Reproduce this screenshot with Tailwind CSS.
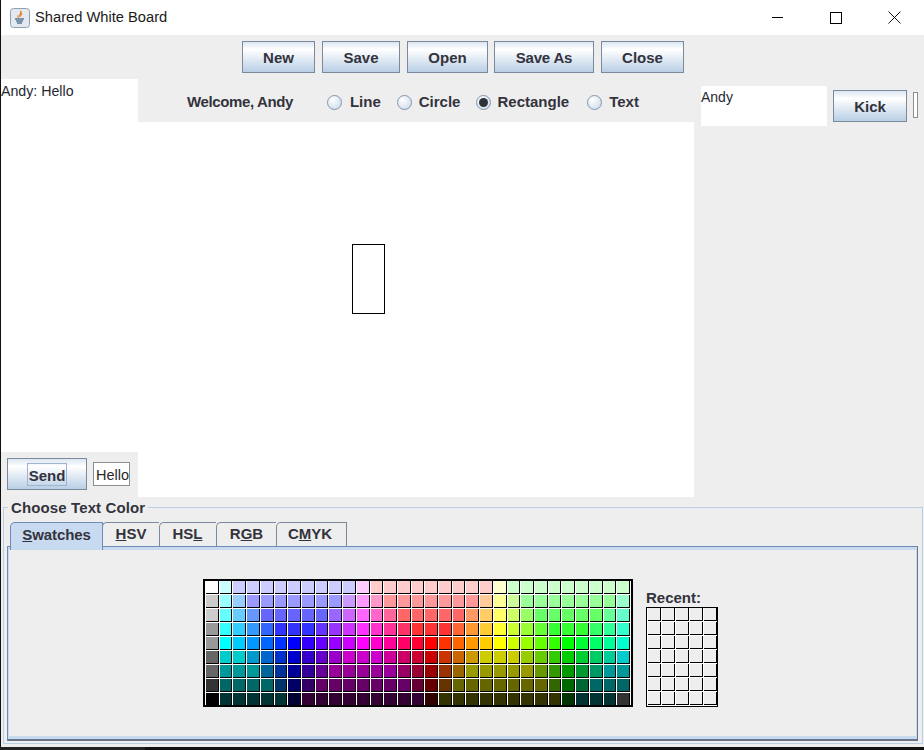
<!DOCTYPE html>
<html lang="en">

<head>
    <meta charset="UTF-8">
    <title>Shared White Board</title>
    <script src="https://cdn.jsdelivr.net/npm/@tailwindcss/browser@4"></script>
</head>

<body class="bg-[#111111] overflow-hidden font-['Liberation_Sans',Arial,sans-serif] text-[#33333d]">
    <div class="w-[924px] h-[750px] flex flex-col">
        <div class="h-[747px] shrink-0 ml-px flex flex-col bg-[#eeeeee]">

            <!-- Title bar -->
            <div class="h-[35px] bg-white flex items-center shrink-0">
                <svg class="ml-[9px]" width="20" height="20" viewBox="0 0 20 20">
                    <rect x="0.5" y="0.5" width="19" height="19" rx="3" fill="#e4e9ef" stroke="#8ea0b3" />
                    <path d="M10 3c2 2-2 3 0 6 1-2 3-2 1-6zM8 7c-1 2 0 3 1 3" fill="#e8822a" stroke="#e8822a" stroke-width=".6" />
                    <path d="M5 11h9M6 13h7M7 15h5" stroke="#5b7a96" stroke-width="1.3" />
                </svg>
                <span class="ml-[5px] text-[14.7px] text-[#1a1a1a]">Shared White Board</span>
                <div class="ml-auto flex items-center">
                    <div class="w-[11px] h-px bg-black mr-[47px]"></div>
                    <div class="w-[12px] h-[12px] border border-black mr-[46px]"></div>
                    <svg class="mr-[23px]" width="13" height="13" viewBox="0 0 13 13">
                        <path d="M.5.5l12 12M12.5.5l-12 12" stroke="#111" fill="none" />
                    </svg>
                </div>
            </div>

            <!-- Toolbar -->
            <div class="h-[44px] shrink-0 flex pt-[6px] pl-[241px] gap-[7px] text-[15px] font-bold">
                <button class="w-[73px] h-[32px] pt-[2px] border border-[#7a8a9c] bg-[linear-gradient(#dbe6f1,#ffffff_25%,#b9cfe5)]">New</button>
                <button class="w-[78px] h-[32px] pt-[2px] border border-[#7a8a9c] bg-[linear-gradient(#dbe6f1,#ffffff_25%,#b9cfe5)]">Save</button>
                <button class="w-[81px] h-[32px] pt-[2px] border border-[#7a8a9c] bg-[linear-gradient(#dbe6f1,#ffffff_25%,#b9cfe5)]">Open</button>
                <button class="w-[100px] h-[32px] pt-[2px] border border-[#7a8a9c] bg-[linear-gradient(#dbe6f1,#ffffff_25%,#b9cfe5)] -ml-px"><span class="tracking-[-0.2px]">Save As</span></button>
                <button class="w-[83px] h-[32px] pt-[2px] border border-[#7a8a9c] bg-[linear-gradient(#dbe6f1,#ffffff_25%,#b9cfe5)]">Close</button>
            </div>

            <!-- Middle -->
            <div class="h-[418px] shrink-0 flex">
                <!-- Chat -->
                <div class="w-[137px] flex flex-col">
                    <div class="flex-1 bg-white text-[14.2px] leading-[24px] text-[#1f2933]">Andy: Hello</div>
                    <div class="h-[45px] flex pt-[6px] pl-[6px]">
                        <button class="w-[80px] h-[32px] border border-[#7a8a9c] bg-[linear-gradient(#dbe6f1,#ffffff_25%,#b9cfe5)] flex items-center justify-center">
                            <span class="w-[40px] h-[23px] border border-[#9fb5cf] text-[15px] font-bold leading-[23px] mt-px">Send</span>
                        </button>
                        <div class="ml-[6px] mt-[4px] w-[37px] h-[24px] bg-white border border-[#8a8f96] text-[14.5px] leading-[24px] pl-[2px] text-[#2a2a2a]">Hello</div>
                    </div>
                </div>

                <!-- Board -->
                <div class="w-[556px] flex flex-col">
                    <div class="h-[43px] flex items-center text-[15px] font-bold pt-[3px] shrink-0">
                        <span class="ml-[49px] tracking-[-0.38px]">Welcome, Andy</span>
                        <span class="ml-[34px] w-[15px] h-[15px] rounded-full border border-[#8296ac] bg-[radial-gradient(circle_at_35%_30%,#ffffff,#c6d7e9)]"></span>
                        <span class="ml-[8px]">Line</span>
                        <span class="ml-[16px] w-[15px] h-[15px] rounded-full border border-[#8296ac] bg-[radial-gradient(circle_at_35%_30%,#ffffff,#c6d7e9)]"></span>
                        <span class="ml-[7px]">Circle</span>
                        <span class="ml-[16px] w-[15px] h-[15px] rounded-full border border-[#8296ac] bg-[radial-gradient(circle_at_35%_30%,#ffffff,#c6d7e9)] flex items-center justify-center">
                            <span class="w-[9px] h-[9px] rounded-full bg-[#2e3338]"></span>
                        </span>
                        <span class="ml-[6px]">Rectangle</span>
                        <span class="ml-[18px] w-[15px] h-[15px] rounded-full border border-[#8296ac] bg-[radial-gradient(circle_at_35%_30%,#ffffff,#c6d7e9)]"></span>
                        <span class="ml-[7px]">Text</span>
                    </div>
                    <div class="flex-1 bg-white relative">
                        <div class="absolute left-[214px] top-[122px] w-[33px] h-[70px] border border-black"></div>
                    </div>
                </div>

                <!-- Users -->
                <div class="flex-1 flex items-start">
                    <div class="ml-[7px] mt-[7px] w-[126px] h-[40px] bg-white text-[14px] leading-[22px] text-[#1f2933]">Andy</div>
                    <button class="ml-[6px] mt-[11px] w-[74px] h-[32px] pt-[2px] border border-[#7a8a9c] bg-[linear-gradient(#dbe6f1,#ffffff_25%,#b9cfe5)] text-[15px] font-bold">Kick</button>
                    <div class="ml-[6px] mt-[13px] w-[5px] h-[26px] border border-[#8a8f96] bg-white"></div>
                </div>
            </div>

            <!-- Colour chooser -->
            <div class="flex-1 relative pt-[10px] pl-[2px] pr-px pb-[3px]">
                <div class="h-full border border-[#b8cfe5] pt-[14px] pl-[3px] pr-[4px] pb-[2px] flex flex-col">
                    <span class="absolute left-[7px] top-[3px] bg-[#eeeeee] px-[3px] text-[15px] font-bold leading-[16px] tracking-[0.12px]">Choose Text Color</span>

                    <!-- Tabs -->
                    <div class="flex h-[24px] shrink-0 pl-[3px] text-[15px] font-bold relative z-10">
                        <div class="relative z-10 w-[93px] h-[28px] pb-[3px] bg-[#c7daf0] border-t border-l border-r border-[#6d8bb5] rounded-tl-[5px] flex items-center justify-center"><span class="tracking-[-0.1px]"><u>S</u>watches</span></div>
                        <div class="w-[57px] -ml-px h-[24px] border-t border-l border-[#7a8a9c] rounded-tl-[5px] flex items-center justify-center"><span><u>H</u>SV</span></div>
                        <div class="w-[57px] h-[24px] pr-px border-t border-l border-[#7a8a9c] rounded-tl-[5px] flex items-center justify-center"><span>HS<u>L</u></span></div>
                        <div class="w-[60px] h-[24px] border-t border-l border-[#7a8a9c] rounded-tl-[5px] flex items-center justify-center"><span>R<u>G</u>B</span></div>
                        <div class="w-[71px] h-[24px] pr-[3px] border-t border-l border-r border-[#7a8a9c] rounded-tl-[5px] flex items-center justify-center"><span>C<u>M</u>YK</span></div>
                    </div>

                    <!-- Tab content -->
                    <div class="flex-1 border border-[#6d8bb5] border-r-[#66758a] border-b-[#66758a] border-b-2">
                        <div class="h-full border-[3px] border-[#c7daf0] border-l-[1px] border-r-[1px] flex pt-[29px] pl-[194px]">
                            <div id="swatches" class="w-[430px] h-[128px] border-2 border-black bg-white grid grid-cols-[repeat(31,1fr)] grid-rows-[repeat(9,14px)] pl-px"></div>
                            <div class="ml-[13px] mt-[9px]">
                                <div class="text-[15px] font-bold leading-[19px]">Recent:</div>
                                <div id="recent" class="w-[72px] h-[100px] border border-black bg-white grid grid-cols-[repeat(5,14px)] grid-rows-[repeat(7,14px)] pl-px"></div>
                            </div>
                        </div>
                    </div>
                </div>
            </div>
        </div>

        <!-- Desktop behind the window -->
        <div class="flex-1 flex">
            <div class="w-[145px] bg-[#222222]"></div>
        </div>
    </div>

    <script>
        // Same palette as the java swing swatch panel, row by row
        const rows = [
            ['FFFFFF', 'CCFFFF', ...Array(9).fill('CCCCFF'), 'FFCCFF', ...Array(9).fill('FFCCCC'), 'FFFFCC', ...Array(9).fill('CCFFCC')],
            ['CCCCCC', '99FFFF', '99CCFF', ...Array(7).fill('9999FF'), 'CC99FF', 'FF99FF', 'FF99CC', ...Array(7).fill('FF9999'), 'FFCC99', 'FFFF99', 'CCFF99', ...Array(7).fill('99FF99'), '99FFCC'],
            ['CCCCCC', '66FFFF', '66CCFF', '6699FF', ...Array(5).fill('6666FF'), '9966FF', 'CC66FF', 'FF66FF', 'FF66CC', 'FF6699', ...Array(5).fill('FF6666'), 'FF9966', 'FFCC66', 'FFFF66', 'CCFF66', '99FF66', ...Array(5).fill('66FF66'), '66FF99', '66FFCC'],
            ['999999', '33FFFF', '33CCFF', '3399FF', '3366FF', ...Array(3).fill('3333FF'), '6633FF', '9933FF', 'CC33FF', 'FF33FF', 'FF33CC', 'FF3399', 'FF3366', ...Array(3).fill('FF3333'), 'FF6633', 'FF9933', 'FFCC33', 'FFFF33', 'CCFF33', '99FF33', '66FF33', ...Array(3).fill('33FF33'), '33FF66', '33FF99', '33FFCC'],
            ['999999', '00FFFF', '00CCFF', '0099FF', '0066FF', '0033FF', '0000FF', '3300FF', '6600FF', '9900FF', 'CC00FF', 'FF00FF', 'FF00CC', 'FF0099', 'FF0066', 'FF0033', 'FF0000', 'FF3300', 'FF6600', 'FF9900', 'FFCC00', 'FFFF00', 'CCFF00', '99FF00', '66FF00', '33FF00', '00FF00', '00FF33', '00FF66', '00FF99', '00FFCC'],
            ['666666', '00CCCC', '00CCCC', '0099CC', '0066CC', '0033CC', '0000CC', '3300CC', '6600CC', '9900CC', 'CC00CC', 'CC00CC', 'CC00CC', 'CC0099', 'CC0066', 'CC0033', 'CC0000', 'CC3300', 'CC6600', 'CC9900', 'CCCC00', 'CCCC00', 'CCCC00', '99CC00', '66CC00', '33CC00', '00CC00', '00CC33', '00CC66', '00CC99', '00CCCC'],
            ['666666', '009999', '009999', '009999', '006699', '003399', '000099', '330099', '660099', ...Array(5).fill('990099'), '990066', '990033', '990000', '993300', '996600', ...Array(5).fill('999900'), '669900', '339900', '009900', '009933', '009966', '009999', '009999'],
            ['333333', ...Array(4).fill('006666'), '003366', '000066', '330066', ...Array(7).fill('660066'), '660033', '660000', '663300', ...Array(7).fill('666600'), '336600', '006600', '006633', ...Array(3).fill('006666')],
            ['000000', ...Array(5).fill('003333'), '000033', ...Array(9).fill('330033'), '330000', ...Array(9).fill('333300'), '003300', ...Array(3).fill('003333'), '333333']
        ];

        const swatches = document.getElementById('swatches');
        rows.flat().forEach(color => {
            const cell = document.createElement('div');
            cell.className = 'border-r border-b border-black mr-px mb-px';
            cell.style.backgroundColor = '#' + color;
            swatches.appendChild(cell);
        });

        const recent = document.getElementById('recent');
        for (let i = 0; i < 35; i++) {
            const cell = document.createElement('div');
            cell.className = 'border-r border-b border-black mr-px mb-px bg-[#eeeeee]';
            recent.appendChild(cell);
        }
    </script>
</body>

</html>
